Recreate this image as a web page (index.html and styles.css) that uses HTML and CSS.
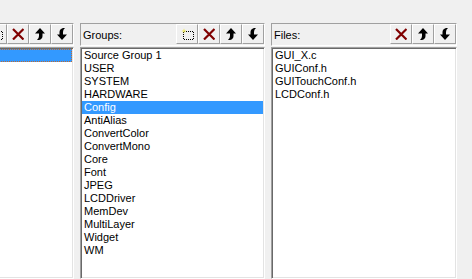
FILE: index.html
```html
<!DOCTYPE html>
<html lang="en">

<head>
    <meta charset="UTF-8">
    <title>Manage Project Items</title>
    <link rel="stylesheet" href="styles.css">
</head>

<body>
    <svg class="defs" width="0" height="0">
        <defs>
            <g id="icon-new">
                <path d="M3 3.5 H13 M3 11.5 H13 M2.5 4 V11 M12.5 4 V11" fill="none" stroke="#000" stroke-dasharray="1 1" />
                <path d="M3 0.5 L3.5 2.5 L5.5 3 L3.5 3.5 L3 5.5 L2.5 3.5 L0.5 3 L2.5 2.5 Z" fill="#e8e000" />
                <rect x="2.5" y="2.5" width="1" height="1" fill="#fff" />
            </g>
            <g id="icon-delete">
                <path d="M1 1 L11.5 11.5 M11.5 1 L1 11.5" stroke="#800000" stroke-width="2.2" />
            </g>
            <g id="icon-up">
                <path d="M5 0 L10 5.5 L7.5 5.5 L7.5 8 Q7.5 11 4 12 L2 12 Q4 10.5 4 8 L4 5.5 L0 5.5 Z" fill="#000" />
            </g>
        </defs>
    </svg>

    <div class="panes">
        <section class="pane">
            <div class="bar">
                <span class="barTitle"></span>
                <div class="tools">
                    <button class="tool"><svg width="13" height="12"><use href="#icon-new" /></svg></button>
                    <button class="tool"><svg width="12" height="12"><use href="#icon-delete" /></svg></button>
                    <button class="tool"><svg width="10" height="12"><use href="#icon-up" /></svg></button>
                    <button class="tool"><svg class="flip" width="10" height="12"><use href="#icon-up" /></svg></button>
                </div>
            </div>
            <ul class="list">
                <li class="selected focused"></li>
            </ul>
        </section>

        <section class="pane">
            <div class="bar">
                <span class="barTitle">Groups:</span>
                <div class="tools">
                    <button class="tool"><svg width="13" height="12"><use href="#icon-new" /></svg></button>
                    <button class="tool"><svg width="12" height="12"><use href="#icon-delete" /></svg></button>
                    <button class="tool"><svg width="10" height="12"><use href="#icon-up" /></svg></button>
                    <button class="tool"><svg class="flip" width="10" height="12"><use href="#icon-up" /></svg></button>
                </div>
            </div>
            <ul class="list">
                <li>Source Group 1</li>
                <li>USER</li>
                <li>SYSTEM</li>
                <li>HARDWARE</li>
                <li class="selected">Config</li>
                <li>AntiAlias</li>
                <li>ConvertColor</li>
                <li>ConvertMono</li>
                <li>Core</li>
                <li>Font</li>
                <li>JPEG</li>
                <li>LCDDriver</li>
                <li>MemDev</li>
                <li>MultiLayer</li>
                <li>Widget</li>
                <li>WM</li>
            </ul>
        </section>

        <section class="pane paneWide">
            <div class="bar">
                <span class="barTitle">Files:</span>
                <div class="tools">
                    <button class="tool"><svg width="12" height="12"><use href="#icon-delete" /></svg></button>
                    <button class="tool"><svg width="10" height="12"><use href="#icon-up" /></svg></button>
                    <button class="tool"><svg class="flip" width="10" height="12"><use href="#icon-up" /></svg></button>
                </div>
            </div>
            <ul class="list">
                <li>GUI_X.c</li>
                <li>GUIConf.h</li>
                <li>GUITouchConf.h</li>
                <li>LCDConf.h</li>
            </ul>
        </section>
    </div>
</body>

</html>
```

FILE: styles.css
```css
* {
    font-family: 'Liberation Sans', Arial, sans-serif;
}

body {
    margin: 0;
    height: 279px;
    overflow: hidden;
    background-color: #f0f0f0;
    font-size: 11px;
    color: #000;
}

.defs {
    position: absolute;
}

.panes {
    box-sizing: border-box;
    display: flex;
    justify-content: flex-end;
    gap: 6px;
    height: 100%;
    padding: 23px 15px 0 0;
}

.pane {
    flex: 0 0 185px;
    display: flex;
    flex-direction: column;
    gap: 1px;
}

.paneWide {
    flex-basis: 186px;
}

.bar {
    box-sizing: border-box;
    display: flex;
    align-items: center;
    justify-content: space-between;
    height: 23px;
    padding: 0 0 0 2px;
    border: 1px solid;
    border-color: #a0a0a0 #fff #fff #a0a0a0;
    white-space: nowrap;
}

.barTitle {
    padding-top: 1px;
}

.tools {
    display: flex;
    align-self: flex-start;
}

.tool {
    box-sizing: border-box;
    display: flex;
    justify-content: center;
    align-items: center;
    width: 22px;
    height: 20px;
    padding: 0;
    background-color: #f0f0f0;
    border: 1px solid;
    border-color: #fff #a0a0a0 #a0a0a0 #fff;
}

.flip {
    transform: rotate(180deg);
}

.list {
    box-sizing: border-box;
    flex: 1;
    margin: 0;
    padding: 1px 1px 0 1px;
    list-style: none;
    background-color: #fff;
    border: 1px solid;
    border-color: #a0a0a0 #fff #fff #a0a0a0;
    box-shadow: inset 1px 1px #696969, inset -1px -1px #e3e3e3;
}

.list li {
    height: 13px;
    line-height: 13px;
    padding-left: 2px;
    white-space: nowrap;
}

.list li.selected {
    background-color: #3399ff;
    color: #fff;
}

.list li.focused {
    outline: 1px dotted #c06a30;
    outline-offset: -1px;
}
```
